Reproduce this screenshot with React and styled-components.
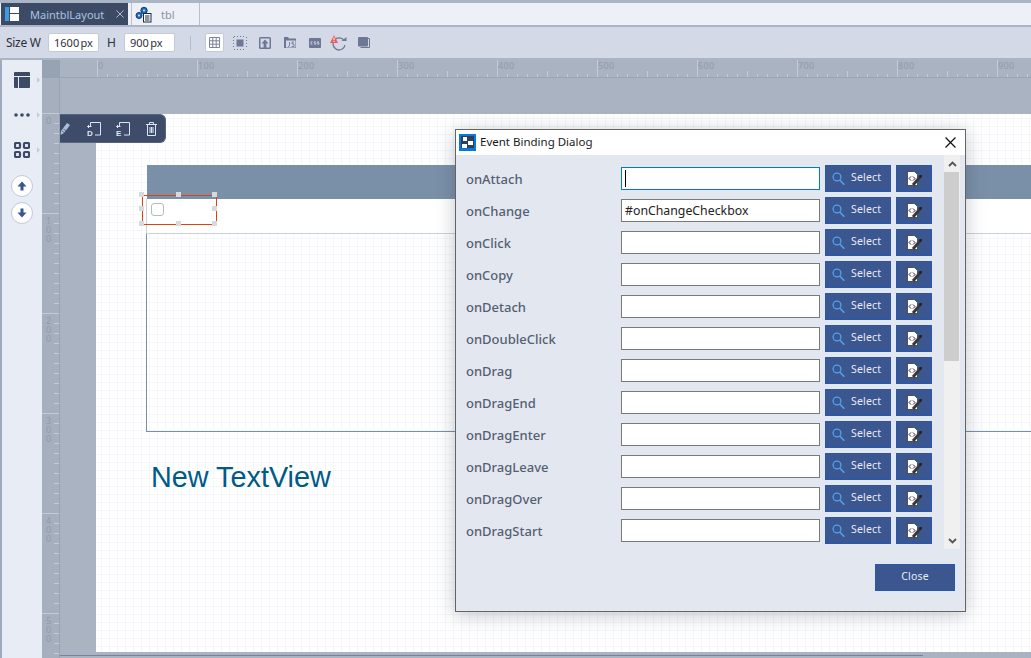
import React from 'react';
import styled, { createGlobalStyle } from 'styled-components';

const Global = createGlobalStyle`
  html, body { margin: 0; padding: 0; background: #a9b3c1; overflow: hidden; }
  * { box-sizing: border-box; }
`;
const UI = `"Noto Sans", "Noto Sans CJK KR", sans-serif`;

const Page = styled.div`
  width: 1031px; height: 658px; display: flex; flex-direction: column; overflow: hidden;
  font-family: ${UI}; position: relative; background: #a9b3c1;
`;
const TabBar = styled.div`
  height: 27px; flex: none; display: flex; align-items: stretch; background: #edf0f7;
  border-top: 3px solid #aab5c6; border-bottom: 2px solid #aab5c6; padding-left: 1px;
`;
const Tab = styled.div`
  display: flex; align-items: center; height: 22px;
  width: ${p => p.$w}px; margin-right: ${p => p.$mr || 0}px;
  background: ${p => p.$active ? '#3d4a66' : '#eef0f7'};
  color: ${p => p.$active ? '#a8c4e2' : '#8a93a5'};
  border-right: ${p => p.$active ? 'none' : '1px solid #b8c0ce'};
  border-left: ${p => p.$active ? 'none' : '1px solid #b8c0ce'};
  padding-left: ${p => p.$pl}px; font-size: 11px;
`;
const TabLabel = styled.span`margin-left: ${p => p.$ml}px; width: ${p => p.$w}px; white-space: nowrap;`;
const Toolbar = styled.div`
  height: 33px; flex: none; display: flex; align-items: center; background: #d3d9e7;
  border-bottom: 2px solid #a9b4c5; padding-left: 6px; font-size: 12px; color: #2d3038;
`;
const SizeField = styled.div`
  width: 51px; height: 19px; background: #fff; border: 1px solid #c3cad8; border-radius: 2px;
  display: flex; align-items: center; padding-left: 5px; font-size: 11px; word-spacing: -1.5px;
  white-space: nowrap; color: #2d3038; flex: none;
`;
const Letter = styled.span`width: ${p => p.$w}px; margin-left: ${p => p.$ml || 0}px; margin-right: ${p => p.$mr || 0}px; white-space: nowrap; letter-spacing: -.3px; flex: none;`;
const Divider = styled.div`width: 1px; height: 14px; background: #b4bccb; margin: 0 14px 0 15px; flex: none;`;
const ToolIcon = styled.div`
  width: ${p => p.$w}px; height: 19px; display: flex; align-items: center; justify-content: center; flex: none;
  margin-right: ${p => p.$mr || 0}px;
  ${p => p.$on && 'background:#fff;border:1px solid #c3cad8;border-radius:2px;'}
`;
const Main = styled.div`flex: 1; display: flex; min-height: 0;`;
const Sidebar = styled.div`
  width: 42px; flex: none; background: #e8ecf5; border-left: 2px solid #9eabbe;
  display: flex; flex-direction: column; align-items: center; padding: 12px 0 0 0;
`;
const SideSlot = styled.div`
  width: 40px; display: flex; justify-content: center; align-items: center; position: relative;
  height: ${p => p.$h}px; margin-bottom: ${p => p.$mb || 0}px;
  &::after { content: ${p => p.$arrow ? '""' : 'none'}; position: absolute; right: 2px; top: 50%; margin-top: -3px;
    border-left: 3px solid #c5ccd9; border-top: 3px solid transparent; border-bottom: 3px solid transparent; }
`;
const RoundBtn = styled.div`
  width: 22px; height: 22px; border-radius: 50%; background: #fff; border: 1px solid #c2c8d4;
  display: flex; align-items: center; justify-content: center; margin-bottom: 5px;
`;
const Stage = styled.div`
  flex: 1; display: grid; grid-template-columns: 18px 1fr; grid-template-rows: 18px 1fr; min-width: 0; position: relative;
`;
const Corner = styled.div`background: #97a3b3;`;
const TopRuler = styled.div`
  position: relative; overflow: hidden; background-color: #a9b3c1; border-bottom: 1px solid #98a5b6;
  background-image:
    repeating-linear-gradient(to right, #c4cbd6 0 1px, transparent 1px 100px),
    repeating-linear-gradient(to right, #c4cbd6 0 1px, transparent 1px 50px),
    repeating-linear-gradient(to right, #c4cbd6 0 1px, transparent 1px 10px);
  background-size: 100% 100%, 100% 6px, 100% 3px;
  background-position: 37px 0, 37px bottom, 37px bottom;
  background-repeat: no-repeat, no-repeat, no-repeat;
`;
const TopMark = styled.span`
  position: absolute; top: 0; font-size: 9px; line-height: 12px; color: #8f9bad; letter-spacing: .3px;
`;
const LeftRuler = styled.div`
  position: relative; overflow: hidden; background-color: #a5afbe; border-right: 1px solid #98a5b6;
  background-image:
    repeating-linear-gradient(to bottom, #c4cbd6 0 1px, transparent 1px 100px),
    repeating-linear-gradient(to bottom, #c4cbd6 0 1px, transparent 1px 10px);
  background-size: 100% 100%, 5px 100%;
  background-position: 0 35px, right 35px;
  background-repeat: no-repeat, no-repeat;
`;
const LeftMark = styled.span`
  position: absolute; left: 2px; width: 9px; font-size: 9px; line-height: 9px; color: #8f9bad; text-align: center; word-break: break-all;
`;
const Workspace = styled.div`
  position: relative; overflow: hidden; padding: 36px 0 6px 36px; background: #a9b3c1; display: flex;
  &::after { content: ""; position: absolute; left: 0; width: 863px; bottom: 2px; height: 1px; background: #77839a; }
`;
const Canvas = styled.div`
  flex: 1; background-color: #fff; padding: 51px 0 0 51px; min-width: 0;
  background-image:
    linear-gradient(to right, #f5f6f9 1px, transparent 1px),
    linear-gradient(to bottom, #f5f6f9 1px, transparent 1px);
  background-size: 8px 8px; background-position: 5px 4px;
`;
const TableHead = styled.div`height: 34px; background: #7a90a8;`;
const TableRow = styled.div`
  height: 35px; background: #fff; border-bottom: 1px solid #cad1db; border-left: 1px solid #cad1db;
  position: relative; padding: 4px 0 0 4px; margin-left: -1px;
`;
const Check = styled.div`width: 13px; height: 13px; border: 1px solid #b4bac7; border-radius: 3px; background: #fff;`;
const Selection = styled.div`
  position: absolute; left: -5px; top: -4px; width: 75px; height: 30px; border: 1px solid #d9450f; pointer-events: none;
`;
const Handle = styled.i`
  position: absolute; width: 5px; height: 5px; background: #d9d9d9;
  left: ${p => p.$x}px; top: ${p => p.$y}px;
`;
const TableBody = styled.div`height: 198px; margin-left: -1px; border-left: 1px solid #7a90a8; border-bottom: 1px solid #7a90a8;`;
const BigText = styled.div`
  font-family: "Liberation Sans", sans-serif; font-size: 28.8px; line-height: 32px; color: #005a87; margin: 29px 0 0 4px;
`;
const FloatBar = styled.div`
  position: absolute; left: 0; top: 36px; width: 106px; height: 29px; background: #3f4c69;
  border: 1px solid #59657f; border-left: none; border-radius: 0 6px 6px 0; display: flex; align-items: center;
`;
const FloatIcon = styled.div`
  display: flex; align-items: center; justify-content: center; width: 16px; height: 16px; margin-left: ${p => p.$ml}px; flex: none;
`;
const Dialog = styled.div`
  position: absolute; left: 455px; top: 129px; width: 511px; height: 483px; background: #e3e8f0;
  border: 1px solid #646464; box-shadow: 0 3px 18px rgba(40,50,70,.28); display: flex; flex-direction: column;
`;
const TitleBar = styled.div`
  height: 25px; flex: none; background: #fff; display: flex; align-items: center; padding: 0 9px 0 3px;
  font-size: 11.5px; color: #1a1a1a;
`;
const TitleText = styled.span`margin-left: 4px; flex: 1; padding-bottom: 2px;`;
const DialogBody = styled.div`display: flex; height: 394px; flex: none; padding-right: 5px;`;
const RowList = styled.div`flex: 1; overflow: hidden; padding: 10px 0 0 10px; display: flex; flex-direction: column; gap: 5px;`;
const EventRow = styled.div`display: flex; align-items: center; height: 27px; flex: none;`;
const EventName = styled.div`width: 155px; font-size: 13px; font-weight: 500; color: #555f72; white-space: nowrap;`;
const EventInput = styled.div`
  width: 199px; height: 23px; background: #fff; border: 1px solid ${p => p.$focus ? '#0078d7' : '#7a7a7a'};
  display: flex; align-items: center; padding-left: 3px; font-size: 12.3px; color: #222; white-space: nowrap; overflow: hidden;
`;
const Caret = styled.span`display: block; width: 1px; height: 17px; background: #000;`;
const BlueButton = styled.div`
  background: #3c5690; border: 1px solid #2757b5; color: #e9edf5; display: flex; align-items: center; flex: none;
  height: 27px; font-size: 10.5px; letter-spacing: .2px;
`;
const SelectBtn = styled(BlueButton)`width: 66px; margin-left: 5px; padding-left: 6px;`;
const EditBtn = styled(BlueButton)`width: 36px; margin-left: 5px; justify-content: center;`;
const SelectText = styled.span`margin-left: 6px; padding-bottom: 3px;`;
const CloseText = styled.span`padding-bottom: 3px;`;
const Scroll = styled.div`width: 16px; margin-left: 12px; background: #f0f0f0; display: flex; flex-direction: column; flex: none;`;
const ScrollArrow = styled.div`height: 17px; display: flex; align-items: center; justify-content: center; flex: none;`;
const Thumb = styled.div`height: 189px; background: #cdcdcd; flex: none; margin-right: 1px;`;
const ScrollRest = styled.div`flex: 1;`;
const DialogFooter = styled.div`flex: 1; display: flex; justify-content: flex-end; padding: 15px 10px 0 0;`;
const CloseBtn = styled(BlueButton)`width: 80px; justify-content: center;`;

const events = ['onAttach','onChange','onClick','onCopy','onDetach','onDoubleClick','onDrag','onDragEnd','onDragEnter','onDragLeave','onDragOver','onDragStart'];

const LogoLayout = () => (
  <svg width="14" height="14" viewBox="0 0 14 14">
    <rect width="4" height="14" fill="#3d9be6"/>
    <rect x="5" width="9" height="6" fill="#fff"/>
    <rect x="5" y="7" width="9" height="7" fill="#fff"/>
  </svg>
);
const X = ({ s = 10, c = '#cfd6e2', w = 1 }) => (
  <svg width={s} height={s} viewBox="0 0 10 10"><path d="M.5.5l9 9M9.5.5l-9 9" stroke={c} strokeWidth={w} fill="none"/></svg>
);
const TblIcon = () => (
  <svg width="17" height="17" viewBox="0 0 17 17">
    <circle cx="9" cy="4.500" r="3.200" fill="#1d6fc0" stroke="#123f75"/>
    <circle cx="9" cy="4.500" r="1" fill="#cfe4f8"/>
    <circle cx="4" cy="9.500" r="3" fill="#1d6fc0" stroke="#123f75"/>
    <circle cx="4" cy="9.500" r="1" fill="#cfe4f8"/>
    <rect x="8.500" y="7.500" width="7.500" height="8.500" fill="#fff" stroke="#1b2a4a"/>
    <path d="M10 10h4.500M10 12h4.500M10 14h4.500" stroke="#1b2a4a"/>
  </svg>
);
const GridIcon = () => (
  <svg width="11" height="11" viewBox="0 0 11 11"><path d="M.5.5h10v10H.5zM3.800.5v10M7.200.5v10M.5 3.800h10M.5 7.200h10" stroke="#6d7894" strokeWidth=".9" fill="none"/></svg>
);
const SelIcon = () => (
  <svg width="14" height="14" viewBox="0 0 14 14">
    <rect x="3.500" y="3.500" width="7" height="7" fill="#6d7894"/>
    <path d="M.5 1v12M13.500 1v12M1 .5h12M1 13.500h12" stroke="#6d7894" strokeDasharray="1 2" fill="none"/>
  </svg>
);
const UploadIcon = () => (
  <svg width="12" height="12" viewBox="0 0 12 12">
    <rect width="12" height="12" rx="1.500" fill="#6d7894"/>
    <rect x="1.500" y="1.500" width="9" height="9" fill="#d3d9e7"/>
    <path d="M6 2.500L2.500 6.500h2.100V12h2.800V6.500h2.100z" fill="#6d7894"/>
  </svg>
);
const JsIcon = () => (
  <svg width="12" height="11" viewBox="0 0 12 11">
    <path d="M0 0h4l1 1.500h7V11H0z" fill="#6d7894"/>
    <rect x="2" y="3.500" width="9.500" height="7" fill="#d3d9e7"/>
    <path d="M5.500 5v3.500q0 1-1.500 1M10 5H8v2h2v2.500H7.500" stroke="#6d7894" strokeWidth=".9" fill="none"/>
  </svg>
);
const CssIcon = () => (
  <svg width="12" height="10" viewBox="0 0 12 10">
    <rect width="12" height="10" rx=".8" fill="#6d7894"/>
    <path d="M3.500 3.800H2v2.400h1.500M6.800 3.800H5.200v1.200h1.600v1.200H5.200M10 3.800H8.400v1.200H10v1.200H8.400" stroke="#e4e8f0" fill="none" strokeWidth=".7"/>
  </svg>
);
const RefreshWarn = () => (
  <svg width="17" height="16" viewBox="0 0 17 16">
    <path d="M14 5.500A6 6 0 1 0 15 10" stroke="#6d7894" strokeWidth="1.300" fill="none"/>
    <path d="M11.500 6h5V2z" fill="#6d7894"/>
    <path d="M4 0l4 8H0z" fill="#ef5a5a"/>
    <path d="M4 2.500V5.200M4 6v1" stroke="#fff" strokeWidth="1"/>
  </svg>
);
const CopyIcon = () => (
  <svg width="12" height="11" viewBox="0 0 12 11">
    <path d="M10 1.500h1.500V10.500H2.500" stroke="#6d7894" fill="none"/>
    <rect width="10" height="9.500" rx="1" fill="#6d7894"/>
  </svg>
);
const SideLayout = () => (
  <svg width="16" height="16" viewBox="0 0 16 16">
    <path d="M1 0h14a1 1 0 0 1 1 1v3H0V1a1 1 0 0 1 1-1z" fill="#3d4a66"/>
    <path d="M0 5h4v11H1a1 1 0 0 1-1-1zM5 5h11v10a1 1 0 0 1-1 1H5z" fill="#3d4a66"/>
  </svg>
);
const Dots = () => (
  <svg width="16" height="4" viewBox="0 0 16 4"><circle cx="2" cy="2" r="1.800" fill="#3d4a66"/><circle cx="8" cy="2" r="1.800" fill="#3d4a66"/><circle cx="14" cy="2" r="1.800" fill="#3d4a66"/></svg>
);
const Squares = () => (
  <svg width="16" height="16" viewBox="0 0 16 16" fill="none" stroke="#3d4a66" strokeWidth="2.200">
    <rect x="1" y="1" width="5" height="5" rx="1"/><rect x="10" y="1" width="5" height="5" rx="1"/>
    <rect x="1" y="10" width="5" height="5" rx="1"/><rect x="10" y="10" width="5" height="5" rx="1"/>
  </svg>
);
const ArrowV = ({ down }) => (
  <svg width="10" height="10" viewBox="0 0 10 10" style={{ transform: down ? 'rotate(180deg)' : 'none' }}>
    <path d="M5 .5L.5 5.500H3.500V9.500H6.500V5.500H9.500z" fill="#38568f"/>
  </svg>
);
const Pencil = () => (
  <svg width="11" height="14" viewBox="0 0 11 14">
    <path d="M1 9l6-8 3 2-6 8-3.500 2z" fill="#a9c0dc"/><path d="M2 9l3 2M3.500 7l3 2" stroke="#3f4c69" strokeWidth=".7"/>
  </svg>
);
const BindIcon = ({ letter }) => (
  <svg width="14" height="14" viewBox="0 0 14 14" fill="none" stroke="#dbe5f3">
    <path d="M3.500 4.500V.5h10v12.500H8"/>
    <path d="M.5 4.500h4M2 3L.5 4.500 2 6"/>
    <text x="0" y="13.500" fontSize="8" fontWeight="700" fontFamily="Liberation Sans" fill="#dbe5f3" stroke="none">{letter}</text>
  </svg>
);
const Trash = () => (
  <svg width="11" height="14" viewBox="0 0 11 14" fill="none" stroke="#dbe5f3">
    <path d="M0 2.500h11M3.500 2.500V.5h4v2M1.500 2.500v11h8v-11M4 5v6M5.500 5v6M7 5v6"/>
  </svg>
);
const SearchIcon = () => (
  <svg width="13" height="13" viewBox="0 0 13 13" fill="none" stroke="#4da3ec" strokeWidth="1.300">
    <circle cx="5" cy="5" r="3.900"/><path d="M7.800 8l4.500 4.700" strokeWidth="1.600"/>
  </svg>
);
const EditIcon = () => (
  <svg width="15" height="15" viewBox="0 0 15 15">
    <path d="M.5.500h7l3 3V14.500H.5z" fill="#fff" stroke="#2a2a2a" strokeWidth=".7"/>
    <path d="M4 5.500L2 7.500l2 2M6 5.500l2 2-2 2" stroke="#222" fill="none"/>
    <path d="M6 14l7-8" stroke="#3a3a3a" strokeWidth="3"/>
    <circle cx="13.500" cy="5.200" r="1.500" fill="#222"/>
  </svg>
);
const Chevron = ({ down }) => (
  <svg width="9" height="6" viewBox="0 0 9 6"><path d={down ? 'M1 1l3.500 3.500L8 1' : 'M1 5l3.500-3.500L8 5'} stroke="#555" strokeWidth="1.800" fill="none"/></svg>
);
const Title = () => (
  <svg width="17" height="17" viewBox="0 0 17 17">
    <rect width="17" height="17" fill="#0a78d6"/>
    <rect x="2" y="2" width="13" height="12" fill="#2e3f5c"/>
    <rect x="4" y="3" width="4" height="4" fill="#fff"/>
    <rect x="9" y="7" width="5" height="4" fill="#fff"/>
    <rect x="3" y="10" width="5" height="4" fill="#fff"/>
  </svg>
);

export default function App() {
  return (
    <Page>
      <Global />
      <TabBar>
        <Tab $active $w={127} $mr={3} $pl={4}>
          <LogoLayout />
          <TabLabel $ml={11} $w={86}>MaintblLayout</TabLabel>
          <X s={8} />
        </Tab>
        <Tab $w={69} $pl={3}>
          <TblIcon />
          <TabLabel $ml={9} $w={20}>tbl</TabLabel>
        </Tab>
      </TabBar>
      <Toolbar>
        <Letter $w={36} $mr={6}>Size W</Letter>
        <SizeField>1600 px</SizeField>
        <Letter $w={9} $ml={8} $mr={8}>H</Letter>
        <SizeField>900 px</SizeField>
        <Divider />
        <ToolIcon $on $w={19} $mr={9}><GridIcon /></ToolIcon>
        <ToolIcon $w={14} $mr={12}><SelIcon /></ToolIcon>
        <ToolIcon $w={12} $mr={13}><UploadIcon /></ToolIcon>
        <ToolIcon $w={12} $mr={13}><JsIcon /></ToolIcon>
        <ToolIcon $w={12} $mr={9}><CssIcon /></ToolIcon>
        <ToolIcon $w={17} $mr={11}><RefreshWarn /></ToolIcon>
        <ToolIcon $w={12}><CopyIcon /></ToolIcon>
      </Toolbar>
      <Main>
        <Sidebar>
          <SideSlot $h={16} $mb={25} $arrow><SideLayout /></SideSlot>
          <SideSlot $h={4} $mb={25} $arrow><Dots /></SideSlot>
          <SideSlot $h={16} $mb={17} $arrow><Squares /></SideSlot>
          <RoundBtn><ArrowV /></RoundBtn>
          <RoundBtn><ArrowV down /></RoundBtn>
        </Sidebar>
        <Stage>
          <Corner />
          <TopRuler>
            {[0,100,200,300,400,500,600,700,800,900].map(n => (
              <TopMark key={n} style={{ left: 38 + n }}>{n}</TopMark>
            ))}
          </TopRuler>
          <LeftRuler>
            {[0,100,200,300,400,500].map(n => (
              <LeftMark key={n} style={{ top: 38 + n }}>{n}</LeftMark>
            ))}
          </LeftRuler>
          <Workspace>
            <Canvas>
              <TableHead />
              <TableRow>
                <Check />
                <Selection>
                  <Handle $x={-4} $y={-4} /><Handle $x={33} $y={-4} /><Handle $x={69} $y={-4} />
                  <Handle $x={-4} $y={10} /><Handle $x={69} $y={10} />
                  <Handle $x={-4} $y={25} /><Handle $x={33} $y={25} /><Handle $x={69} $y={25} />
                </Selection>
              </TableRow>
              <TableBody />
              <BigText>New TextView</BigText>
            </Canvas>
            <FloatBar>
              <Pencil />
              <FloatIcon $ml={15}><BindIcon letter="D" /></FloatIcon>
              <FloatIcon $ml={13}><BindIcon letter="E" /></FloatIcon>
              <FloatIcon $ml={12}><Trash /></FloatIcon>
            </FloatBar>
          </Workspace>
        </Stage>
      </Main>
      <Dialog>
        <TitleBar>
          <Title />
          <TitleText>Event Binding Dialog</TitleText>
          <X s={11} c="#111" w={1.1} />
        </TitleBar>
        <DialogBody>
          <RowList>
            {events.map((e, i) => (
              <EventRow key={e}>
                <EventName>{e}</EventName>
                <EventInput $focus={i === 0}>
                  {i === 0 && <Caret />}
                  {i === 1 && '#onChangeCheckbox'}
                </EventInput>
                <SelectBtn><SearchIcon /><SelectText>Select</SelectText></SelectBtn>
                <EditBtn><EditIcon /></EditBtn>
              </EventRow>
            ))}
          </RowList>
          <Scroll>
            <ScrollArrow><Chevron /></ScrollArrow>
            <Thumb />
            <ScrollRest />
            <ScrollArrow><Chevron down /></ScrollArrow>
          </Scroll>
        </DialogBody>
        <DialogFooter><CloseBtn><CloseText>Close</CloseText></CloseBtn></DialogFooter>
      </Dialog>
    </Page>
  );
}
